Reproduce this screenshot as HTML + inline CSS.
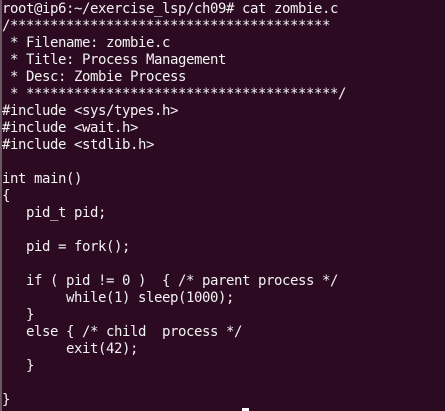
<!DOCTYPE html>
<html><head><style>
html,body{margin:0;padding:0;}
body{width:445px;height:411px;background:#2c0a22;overflow:hidden;position:relative;}
pre{margin:0;position:absolute;left:2px;top:1px;font-family:"DejaVu Sans Mono","Liberation Mono",monospace;font-size:14px;letter-spacing:-0.43px;line-height:17px;color:#f2f2f2;}
.bl{position:absolute;left:0;top:0;width:2px;height:411px;background:#6b5a62;}
.cur{position:absolute;left:242px;top:408px;width:7px;height:3px;background:#fff;}
</style></head><body>
<div class="bl"></div>
<pre>root@ip6:~/exercise_lsp/ch09# cat zombie.c
/****************************************
 * Filename: zombie.c
 * Title: Process Management
 * Desc: Zombie Process
 * ***************************************/
#include &lt;sys/types.h&gt;
#include &lt;wait.h&gt;
#include &lt;stdlib.h&gt;

int main()
{
   pid_t pid;

   pid = fork();

   if ( pid != 0 )  { /* parent process */
        while(1) sleep(1000);
   }
   else { /* child  process */
        exit(42);
   }

}</pre>
<div class="cur"></div>
</body></html>
